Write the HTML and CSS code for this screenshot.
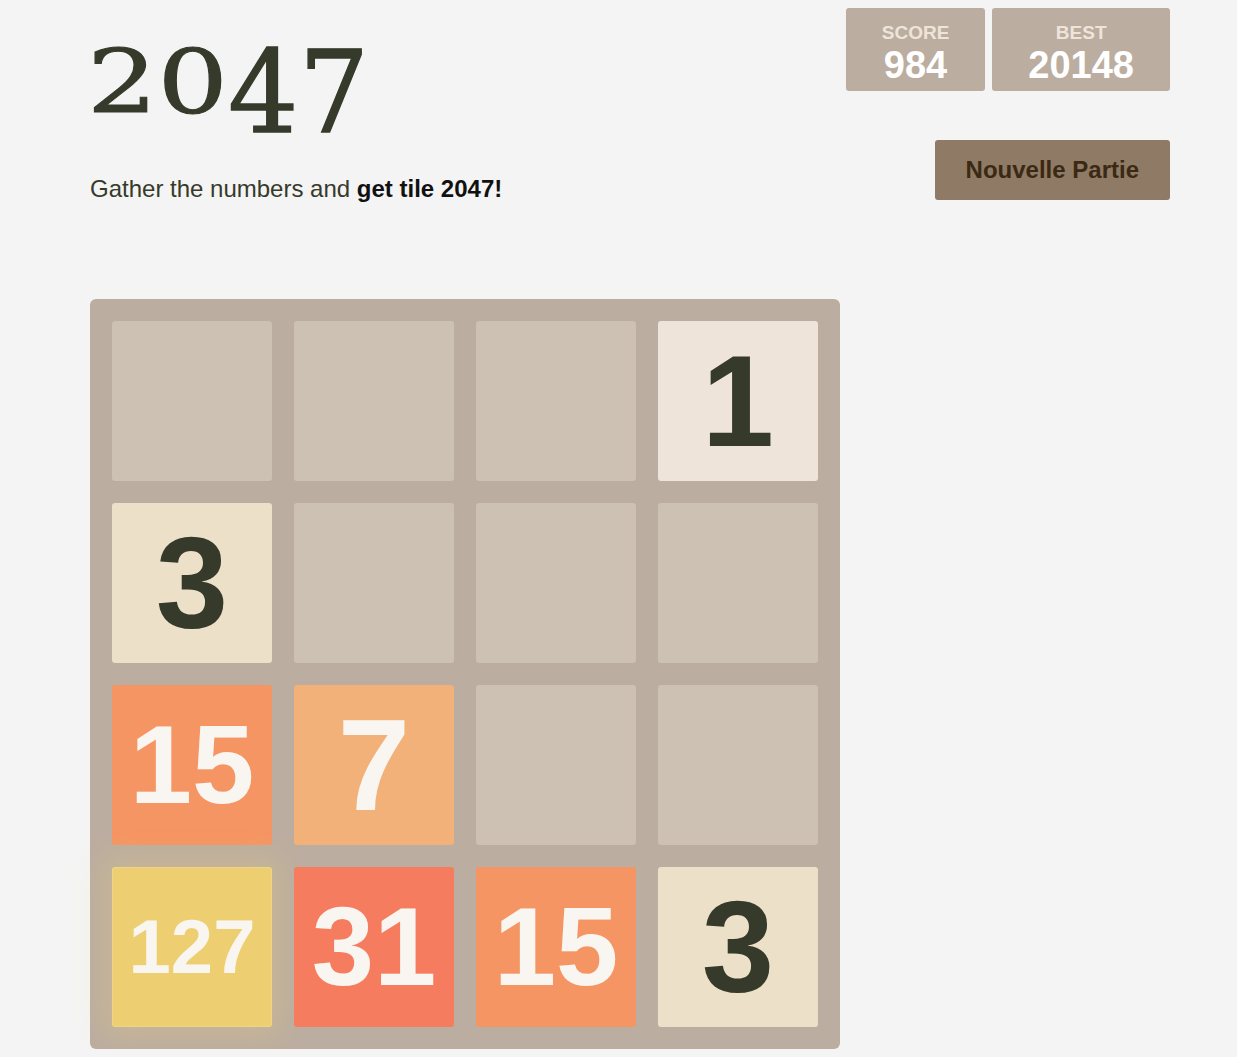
FILE: index.html
```html
<!DOCTYPE html>
<html lang="en">

<head>
    <meta charset="utf-8">
    <title>2047</title>
    <meta name="viewport" content="width=device-width, initial-scale=1.0">
    <link rel="stylesheet" href="styles.css">
</head>

<body>
    <div class="container">
        <div class="heading">
            <div class="intro">
                <h1 class="title"><span class="low">20</span><span class="tall">47</span></h1>
                <p class="game-intro">Gather the numbers and <strong>get tile 2047!</strong></p>
            </div>
            <div class="controls">
                <div class="scores">
                    <div class="score-box">
                        <span class="label">SCORE</span>
                        <span class="value">984</span>
                    </div>
                    <div class="score-box">
                        <span class="label">BEST</span>
                        <span class="value">20148</span>
                    </div>
                </div>
                <a class="restart-button">Nouvelle Partie</a>
            </div>
        </div>

        <div class="grid">
            <div class="cell"></div>
            <div class="cell"></div>
            <div class="cell"></div>
            <div class="cell tile tile-1">1</div>

            <div class="cell tile tile-3">3</div>
            <div class="cell"></div>
            <div class="cell"></div>
            <div class="cell"></div>

            <div class="cell tile tile-15 two">15</div>
            <div class="cell tile tile-7">7</div>
            <div class="cell"></div>
            <div class="cell"></div>

            <div class="cell tile tile-127 three">127</div>
            <div class="cell tile tile-31 two">31</div>
            <div class="cell tile tile-15 two">15</div>
            <div class="cell tile tile-3">3</div>
        </div>
    </div>
</body>
</html>
```

FILE: styles.css
```css
body {
    margin: 0;
    background-color: #f4f4f4;
    color: #363a2b;
    font-family: "Liberation Sans", Arial, sans-serif;
}
.container {
    width: 1080px;
    margin-left: 90px;
}
.heading {
    display: flex;
    justify-content: space-between;
    height: 299px;
}

/* title: old style figures, 2 and 0 sit on the baseline, 4 and 7 hang below */
.title {
    margin: 0 0 0 -3px;
    padding-top: 39px;
    height: 85px;
    font-family: "DejaVu Serif", "Liberation Serif", serif;
    font-weight: normal;
    font-size: 88px;
    line-height: 1;
    -webkit-text-stroke: 1px #363a2b;
    transform: scaleX(1.26);
    transform-origin: left top;
}
.title .tall {
    display: inline-block;
    transform: scaleY(1.3);
    transform-origin: 50% 10px;
}
.game-intro {
    margin: 51px 0 0 0;
    font-size: 24px;
    line-height: 28px;
}
.game-intro strong {
    color: #111;
}

.controls {
    display: flex;
    flex-direction: column;
    align-items: flex-end;
}
.scores {
    display: flex;
    gap: 7px;
    margin-top: 8px;
}
.score-box {
    display: flex;
    flex-direction: column;
    align-items: center;
    height: 83px;
    box-sizing: border-box;
    padding: 14px 36px 0 36px;
    background-color: #bbada0;
    border-radius: 3px;
    font-weight: bold;
}
.score-box .label {
    font-size: 19px;
    line-height: 22px;
    color: #eee4da;
}
.score-box .value {
    margin-top: 2px;
    font-size: 38px;
    line-height: 38px;
    color: #fff;
}
.restart-button {
    display: block;
    margin-top: 49px;
    height: 60px;
    padding: 0 31px;
    background-color: #8f7a66;
    border-radius: 3px;
    color: #3b2914;
    font-size: 24px;
    font-weight: bold;
    line-height: 60px;
}

.grid {
    display: grid;
    grid-template-columns: repeat(4, 160px);
    grid-auto-rows: 160px;
    gap: 22px;
    padding: 22px;
    width: fit-content;
    background-color: #bbada0;
    border-radius: 6px;
}
.cell {
    background-color: #cdc1b4;
    border-radius: 3px;
}
.tile {
    display: flex;
    align-items: center;
    justify-content: center;
    font-size: 130px;
    font-weight: bold;
    line-height: 1;
    color: #f9f6f2;
}
.tile.two {
    font-size: 112px;
}
.tile.three {
    font-size: 76px;
}
.tile-1 {
    background-color: #eee4da;
    color: #363a2b;
}
.tile-3 {
    background-color: #ede0c8;
    color: #363a2b;
}
.tile-7 {
    background-color: #f2b179;
}
.tile-15 {
    background-color: #f59563;
}
.tile-31 {
    background-color: #f67c5f;
}
.tile-127 {
    background-color: #edcf72;
    box-shadow: 0 0 30px 10px rgba(243, 215, 116, 0.24), inset 0 0 0 1px rgba(255, 255, 255, 0.14);
}
```
